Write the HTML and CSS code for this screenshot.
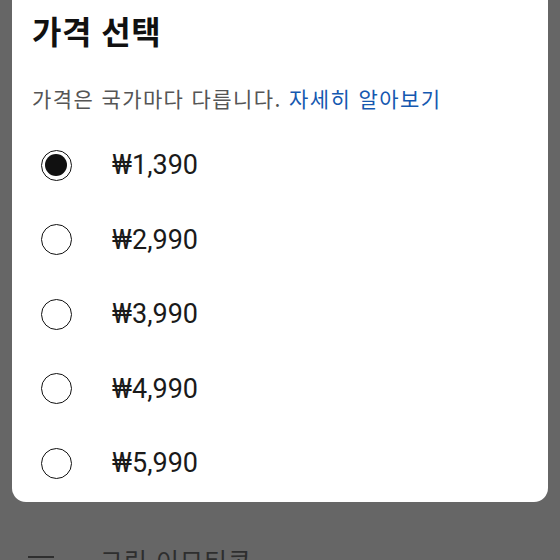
FILE: index.html
```html
<!DOCTYPE html>
<html lang="ko">
<head>
    <meta charset="UTF-8">
    <meta name="viewport" content="width=device-width, initial-scale=1.0">
    <title>가격 선택</title>
    <link rel="stylesheet" href="styles.css">
</head>
<body>
    <div class="dialog">
        <h1 class="dialog-title">가격 선택</h1>
        <p class="dialog-note">가격은 국가마다 다릅니다. <a href="#" class="more-link">자세히 알아보기</a></p>

        <div class="price-list">
            <label class="price-option">
                <span class="radio checked"></span>
                <span class="price">₩1,390</span>
            </label>
            <label class="price-option">
                <span class="radio"></span>
                <span class="price">₩2,990</span>
            </label>
            <label class="price-option">
                <span class="radio"></span>
                <span class="price">₩3,990</span>
            </label>
            <label class="price-option">
                <span class="radio"></span>
                <span class="price">₩4,990</span>
            </label>
            <label class="price-option">
                <span class="radio"></span>
                <span class="price">₩5,990</span>
            </label>
        </div>
    </div>

    <div class="behind-row">
        <span class="behind-icon"></span>
        <span class="behind-text">그림 이모티콘</span>
    </div>
</body>
</html>
```

FILE: styles.css
```css
body {
    margin: 0;
    height: 560px;
    overflow: hidden;
    background-color: #666666;
    font-family: Roboto, "Noto Sans CJK KR", sans-serif;
}

.dialog {
    background: #ffffff;
    margin: 0 12px;
    padding: 0 20px 2px;
    border-radius: 0 0 14px 14px;
}

.dialog-title {
    margin: 0;
    height: 60px;
    line-height: 60px;
    font-size: 32px;
    letter-spacing: 0.5px;
    font-weight: bold;
    color: #111111;
    font-family: "Noto Sans CJK KR", sans-serif;
}

.dialog-note {
    margin: 24px 0 0;
    height: 43.75px;
    line-height: 28px;
    font-size: 21px;
    letter-spacing: 1.4px;
    color: #555555;
    font-family: "Noto Sans CJK KR", sans-serif;
}

.more-link {
    color: #1558b0;
    text-decoration: none;
}

.price-list {
    display: flex;
    flex-direction: column;
}

.price-option {
    display: flex;
    align-items: center;
    height: 74.5px;
}

.radio {
    box-sizing: border-box;
    width: 31px;
    height: 31px;
    margin-left: 9px;
    border: 1.5px solid #111111;
    border-radius: 50%;
    padding: 3px;
}

.radio.checked::after {
    content: "";
    display: block;
    width: 22px;
    height: 22px;
    border-radius: 50%;
    background: #111111;
}

.price {
    margin-left: 40px;
    font-size: 27px;
    color: #1a1a1a;
}

.behind-row {
    display: flex;
    align-items: center;
    margin-top: 40px;
    padding-left: 28px;
}

.behind-icon {
    width: 26px;
    height: 2px;
    background: #2e2e2e;
    margin-top: -6px;
}

.behind-text {
    margin-left: 46px;
    font-size: 25px;
    letter-spacing: 1px;
    color: #2e2e2e;
    font-family: "Noto Sans CJK KR", sans-serif;
}
```
